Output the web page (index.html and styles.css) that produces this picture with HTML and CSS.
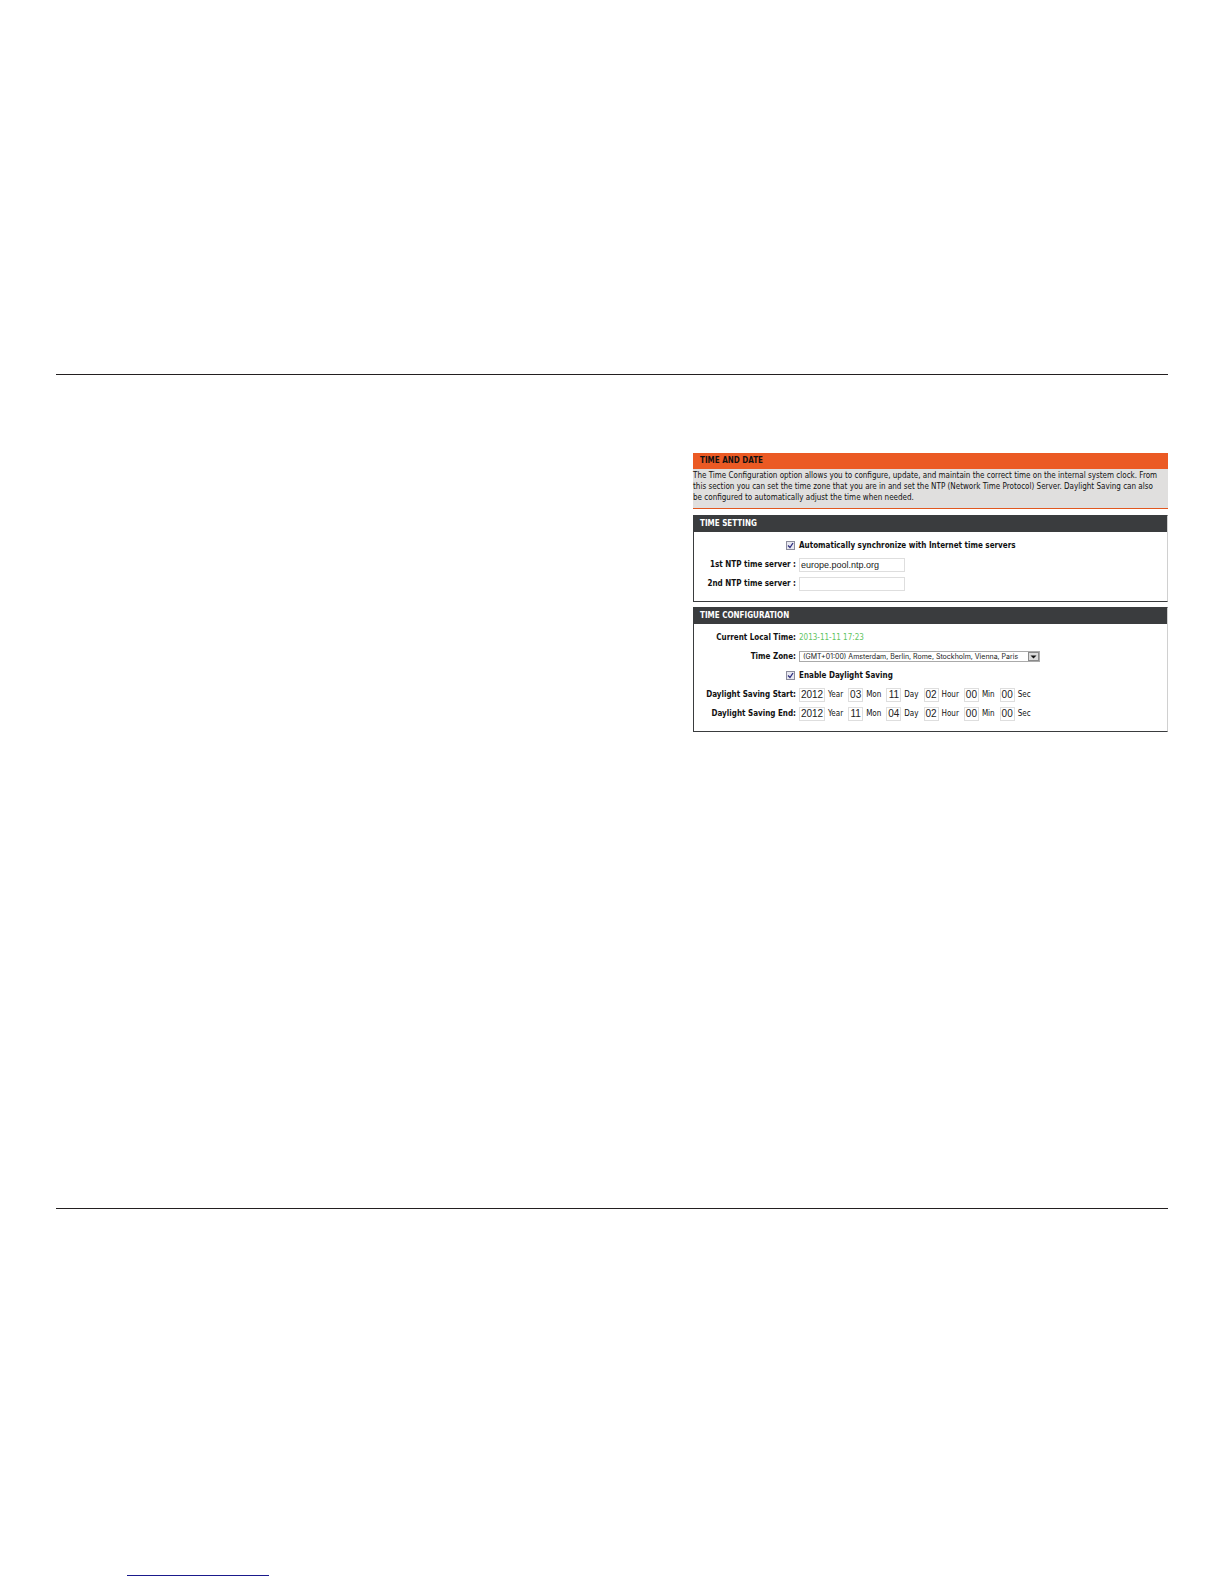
FILE: index.html
```
<!DOCTYPE html>
<html lang="en">
<head>
  <meta charset="UTF-8">
  <meta name="viewport" content="width=device-width, initial-scale=1.0">
  <title>Time and Date</title>
  <link rel="stylesheet" href="styles.css">
</head>
<body>
  <header class="page-header"></header>

  <main class="page-content">
    <form class="settings">
      <!-- Intro -->
      <section class="intro">
        <h1>TIME AND DATE</h1>
        <p>The Time Configuration option allows you to configure, update, and maintain the correct time on the internal system clock. From<br>
        this section you can set the time zone that you are in and set the NTP (Network Time Protocol) Server. Daylight Saving can also<br>
        be configured to automatically adjust the time when needed.</p>
      </section>

      <!-- Time setting -->
      <section class="box">
        <h2>TIME SETTING</h2>
        <div class="rows">
          <div class="row">
            <input type="checkbox" id="auto-sync" checked>
            <label for="auto-sync">Automatically synchronize with Internet time servers</label>
          </div>
          <div class="row">
            <label for="ntp1">1st NTP time server :</label>
            <input type="text" id="ntp1" class="server" value="europe.pool.ntp.org">
          </div>
          <div class="row">
            <label for="ntp2">2nd NTP time server :</label>
            <input type="text" id="ntp2" class="server">
          </div>
        </div>
      </section>

      <!-- Time configuration -->
      <section class="box">
        <h2>TIME CONFIGURATION</h2>
        <div class="rows">
          <div class="row">
            <label for="local-time">Current Local Time:</label>
            <output id="local-time">2013-11-11 17:23</output>
          </div>
          <div class="row">
            <label for="time-zone">Time Zone:</label>
            <div class="select-wrap">
              <select id="time-zone">
                <option>(GMT+01:00) Amsterdam, Berlin, Rome, Stockholm, Vienna, Paris</option>
              </select>
              <svg class="arrow" viewBox="0 0 11 9" aria-hidden="true">
                <rect x="0.5" y="0.5" width="10" height="8" fill="#dcdcdc" stroke="#8a8a8a"/>
                <path d="M2.500 3.500h6L5.500 6.500z" fill="#111"/>
              </svg>
            </div>
          </div>
          <div class="row">
            <input type="checkbox" id="daylight" checked>
            <label for="daylight">Enable Daylight Saving</label>
          </div>
          <div class="row">
            <span class="title" id="dst-start">Daylight Saving Start:</span>
            <div class="date" role="group" aria-labelledby="dst-start">
              <input type="text" id="s-year" class="year" value="2012"><label for="s-year">Year</label>
              <input type="text" id="s-mon" value="03"><label for="s-mon">Mon</label>
              <input type="text" id="s-day" value="11"><label for="s-day">Day</label>
              <input type="text" id="s-hour" value="02"><label for="s-hour">Hour</label>
              <input type="text" id="s-min" value="00"><label for="s-min">Min</label>
              <input type="text" id="s-sec" value="00"><label for="s-sec">Sec</label>
            </div>
          </div>
          <div class="row">
            <span class="title" id="dst-end">Daylight Saving End:</span>
            <div class="date" role="group" aria-labelledby="dst-end">
              <input type="text" id="e-year" class="year" value="2012"><label for="e-year">Year</label>
              <input type="text" id="e-mon" value="11"><label for="e-mon">Mon</label>
              <input type="text" id="e-day" value="04"><label for="e-day">Day</label>
              <input type="text" id="e-hour" value="02"><label for="e-hour">Hour</label>
              <input type="text" id="e-min" value="00"><label for="e-min">Min</label>
              <input type="text" id="e-sec" value="00"><label for="e-sec">Sec</label>
            </div>
          </div>
        </div>
      </section>
    </form>
  </main>

  <footer class="page-footer">
    <a href="#" class="footer-link" aria-label="Home"></a>
  </footer>
</body>
</html>
```
FILE: styles.css
```
* {
  box-sizing: border-box;
}

body {
  margin: 0;
  min-height: 100vh;
  display: flex;
  flex-direction: column;
  background-color: #fff;
  color: #111;
  font-family: "DejaVu Sans Condensed", "DejaVu Sans", sans-serif;
  font-size: 8px;
}

.page-header {
  height: 375px;
  margin: 0 56px;
  border-bottom: 1px solid #231f20;
}

.page-content {
  flex: 1;
  display: flex;
  justify-content: flex-end;
  align-items: flex-start;
  margin: 0 56px;
  padding-top: 78px;
  border-bottom: 1px solid #231f20;
}

.page-footer {
  height: 375px;
  padding: 0 127px 8px;
  display: flex;
  align-items: flex-end;
}

.footer-link {
  width: 142px;
  border-bottom: 1px solid #1a1a8c;
}

.settings {
  width: 475px;
}

h1,
h2 {
  margin: 0;
  padding-left: 7px;
  font-size: 8px;
  line-height: 16px;
}

.intro {
  margin-bottom: 6px;
  background-color: #e0dfde;
  border-bottom: 1px solid #e0571f;
}

.intro h1 {
  background-color: #eb5a24;
}

.intro p {
  margin: 0;
  padding: 1px 0 5px;
  line-height: 11px;
  white-space: nowrap;
}

.box {
  margin-bottom: 5px;
  border: 1px solid #3a3c3e;
  border-right-color: #d0d0d0;
}

.box h2 {
  background-color: #3a3c3e;
  color: #fff;
  padding-left: 6px;
}

.rows {
  padding: 4px 0 8px;
}

.row {
  display: grid;
  grid-template-columns: 102px 1fr;
  column-gap: 3px;
  align-items: center;
  min-height: 19px;
}

.row > label,
.row > .title {
  font-weight: bold;
  white-space: nowrap;
}

.row > :first-child {
  justify-self: end;
}

input[type="text"] {
  height: 14px;
  margin: 0;
  padding: 0 1px;
  border: 1px solid #dedede;
  font-family: "Liberation Sans", sans-serif;
  font-size: 10px;
  color: #222;
}

input.server {
  width: 106px;
  font-size: 9px;
}

input[type="checkbox"] {
  appearance: none;
  width: 9px;
  height: 9px;
  margin: 0 1px 0 0;
  border: 1px solid #8c8c9c;
  background-color: #e8e8f0;
}

input[type="checkbox"]:checked {
  background-image: url("data:image/svg+xml,%3Csvg xmlns='http://www.w3.org/2000/svg' viewBox='0 0 7 7'%3E%3Cpath d='M1 3.500l2 2L6 1' fill='none' stroke='%23303080' stroke-width='1.300'/%3E%3C/svg%3E");
}

output {
  color: #62c462;
}

.select-wrap {
  position: relative;
  width: 241px;
}

select {
  display: block;
  appearance: none;
  width: 100%;
  height: 11px;
  padding: 0 3px;
  border: 1px solid #aaa;
  border-radius: 0;
  background-color: #fff;
  color: #222;
  font-family: Inter, sans-serif;
  font-size: 7px;
  line-height: 9px;
}

.arrow {
  position: absolute;
  top: 1px;
  right: 1px;
  width: 11px;
  height: 9px;
  pointer-events: none;
}

.date {
  display: flex;
  align-items: center;
}

.date input[type="text"] {
  width: 15px;
  text-align: center;
  padding: 0;
}

.date input.year {
  width: 26px;
}

.date label {
  margin: 0 5px 0 3px;
}
```
